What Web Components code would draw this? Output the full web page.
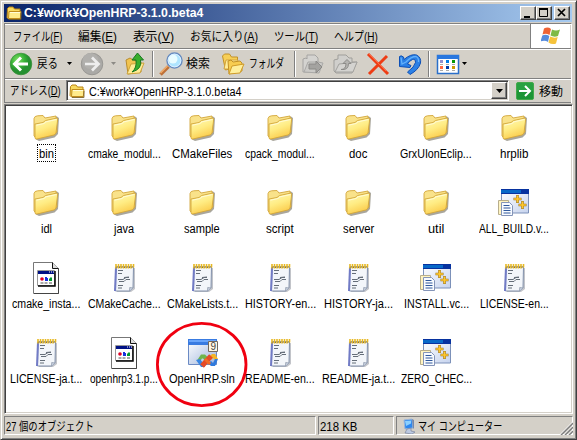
<!DOCTYPE html>
<html lang="ja">
<head>
<meta charset="utf-8">
<title>C:¥work¥OpenHRP-3.1.0.beta4</title>
<style>
html,body{margin:0;width:577px;height:440px;overflow:hidden;background:#d4d0c8}
body{font:12px/14px "Liberation Sans","Noto Sans CJK JP",sans-serif;color:#000}
</style>
</head>
<body>
<explorer-window></explorer-window>
<script>
const folder = `<g transform="translate(0 1)"><path d="M5 8Q8 3 14 4L15 7L27 3.500L29 5L28 21L24.500 24.500L9 28L6 26.500Z" fill="#6f6a5c" opacity=".6"/>
<path d="M4 5.500Q4.500 3 7.500 2.800L13 2.500L15 5L26 3L27 19L7 25.500L4 23Z" fill="#f9e28a" stroke="#d3a63a" stroke-width=".9"/>
<path d="M5 11L13 9.500L15.500 7.500L27 5Q28 5.500 27.500 8L26 20Q25.500 21.500 24 22L7 26Q5 26.500 5 24.500Z" fill="url(#g)" stroke="#d3a63a" stroke-width=".9"/>
<path d="M6.500 12.200L14 10.500L16 8.800L26.500 6.500" stroke="#fffbd5" fill="none"/></g>
<defs><linearGradient id="g" x1="0" y1="0" x2=".4" y2="1"><stop offset="0" stop-color="#fffbbd"/><stop offset=".55" stop-color="#ffec83"/><stop offset="1" stop-color="#fbcd4e"/></linearGradient></defs>`;
const ICONS = {
folder:['0 0 32 32',folder],
small:['0 0 16 16',`<path d="M1.500 3.500L3 2h4l1.500 2H14v10H2.500L1 12.500Z" fill="#f8d95f" stroke="#b98516"/><path d="M2.500 13.500L3 6.500h12l-.7 7z" fill="#ffeb8b" stroke="#c18d1e"/><path d="M4 7.500h10" stroke="#fffcd7"/><path d="M3 14.500h12V8" fill="none" stroke="#715b25" stroke-width=".8"/>`],
note:['0 0 32 32',`<path d="M9 7L27 6v21l-4 3H9Z" fill="#9a9da5" opacity=".6"/><path d="M8 4.500L25.500 4.500L25 26L21.500 29H7.500Z" fill="#f3f6fa" stroke="#8291ac"/><path d="M7 5L9 6L8 29H6Z" fill="#717bc5"/><path d="M21.500 29l.2-3.500L25 26" fill="#c8d1df" stroke="#8995a8" stroke-width=".7"/><path d="M10 8.500h5M10 11.500h4M10 23.500h5M10 26h4M10 17.500h5l3-2h3M11 19.500h5l2-2h4M16 15.500l5-.5" stroke="#656e79" fill="none"/><path d="M8 2V6.500M10.500 2V6.500M13 2V6.500M15.500 2V6.500M18 2V6.500M20.500 2V6.500M23 2V6.500M25.500 2V5.500" stroke="#e7b822" stroke-width="1.600"/><path d="M8.500 5.500h17" stroke="#8b7545" stroke-dasharray="1 1.500"/>`],
file:['0 0 32 32',`<path d="M3.500.5h19l6 6v25h-25z" fill="#fff" stroke="#777"/><path d="M28.500 7v24.500H4" stroke="#444" fill="none"/><path d="M22.500.5v6h6" fill="#ddd" stroke="#111"/><path d="M7.500 8.500h17v15h-17z" fill="#fff" stroke="#999"/><path d="M25 9v15H8" stroke="#000" fill="none" stroke-width="1.500"/><path d="M8 9h16v3H8z" fill="#001184"/><path d="M19 10h1m1 0h1m1 0h1" stroke="#fff"/><circle cx="12" cy="17" r="1.800" fill="#e00024"/><path d="M15 15h2v1h1v3h-3z" fill="#1831dc"/><path d="M19 19v-2l2-2 1 1v3z" fill="#009a2e"/><path d="M10.500 21h3m1 0h3m1.500 0h3" stroke="#555"/>`],
project:['1 0 32 32',`<defs><linearGradient id="p" x2="1" y2="1"><stop stop-color="#fff"/><stop offset="1" stop-color="#c6d3ee"/></linearGradient></defs><path d="M4.500 3h27v23h-27z" fill="url(#p)" stroke="#7c91b9"/><path d="M4 2h28v5H4z" fill="#07329f"/><path d="M4 3h20v3H4z" fill="#0768c8"/><path d="M20.500 8v8M16.500 12h8M25.500 14v8M21.500 18h8" stroke="#9a7219" stroke-width="2.600"/><path d="M20.500 8.500v7M17 12h7M25.500 14.500v7M22 18h7" stroke="#ffc82d" stroke-width="1.700"/><path d="M1.500 13.500h10v14h-10z" fill="#fff4c0" stroke="#b8ae8c"/><path d="M4.500 15.500h8l3 3v10h-11z" fill="#f8fbff" stroke="#8494b8"/><path d="M6.500 18.500h6m-6 2.500h7m-7 2.500h7m-7 2.500h7" stroke="#30599c"/>`],
solution:['0 0 32 32',`<defs><linearGradient id="s" x2="1" y2="1"><stop stop-color="#fff"/><stop offset="1" stop-color="#9eb4dc"/></linearGradient></defs><path d="M2.500 3.500h28v24h-28z" fill="url(#s)" stroke="#6b8ac4"/><path d="M2 2h29v6H2z" fill="#397be1"/><path d="M3 3h27v2H3z" fill="#69a5fa"/><path d="M22.500 4.500h9v10h-9z" fill="#fff8e4" stroke="#73685c"/><path d="M15 17.500h4l4 4-3 3-3-3h-1l-2 3-3-1z" fill="#6fb54c"/><path d="M10 23l4-1 3 4 2-1v5h-4z" fill="#3886e2"/><path d="M22 21l4-4h3l3 5-3 1-2-2-2 2z" fill="#f4b426"/><path d="M22 26l3-2 2 2 2-4h3l-3 7h-4z" fill="#2f7add"/><path d="M16 29l9-10" stroke="#e64a26" stroke-width="5"/><path d="M19 22l5 5" stroke="#f26b25" stroke-width="3"/><text x="24.400" y="13" font-family="Liberation Sans" font-size="10" fill="#444">9</text>`],
back:['0 0 24 24',`<defs><radialGradient id="b" cx=".35" cy=".3"><stop stop-color="#7fdf65"/><stop offset=".65" stop-color="#35b035"/><stop offset="1" stop-color="#249030"/></radialGradient></defs><circle cx="12" cy="12" r="10.800" fill="url(#b)" stroke="#368d35" stroke-width=".7"/><path d="M19 12H6M12 5.500L5.500 12l6.500 6.500" fill="none" stroke="#fff" stroke-width="3"/>`],
forward:['0 0 24 24',`<circle cx="12" cy="12" r="10.800" fill="#aaa9a6" stroke="#92918d" stroke-width=".8"/><circle cx="10.500" cy="9" r="8" fill="#b1b0ad"/><path d="M5 12h13M12 5.500l6.500 6.500-6.500 6.500" fill="none" stroke="#eee" stroke-width="2.700"/>`],
up:['0 0 20 24',`<path d="M1 8l4-2 3 2 8 2v10L3 22z" fill="#f1c451" stroke="#b98c2d"/><path d="M2 22l4-10 13-1-4 10z" fill="#ffec96" stroke="#cda33c"/><path d="M7 20q5-4 4-12H7l5.500-7 6 7h-3q2 9-8.500 12z" fill="#39ae2d" stroke="#187721"/>`],
search:['0 0 24 24',`<path d="M1.500 22.500l8-8" stroke="#bd7038" stroke-width="3.500"/><path d="M1.500 21l7-7" stroke="#f2ac69" stroke-width="1.500"/><circle cx="15.500" cy="8.500" r="7.500" fill="#aee5ff" stroke="#688cbf" stroke-width="1.500"/><circle cx="14" cy="7" r="4.500" fill="#e9fcff"/><circle cx="15.500" cy="8.500" r="6.400" fill="none" stroke="#dcefff"/>`],
folders:['0 0 24 24',`<path d="M1.500 4l2-2h5l2 3h6v10l-12 3z" fill="#f7cf57" stroke="#c29128"/><path d="M3 17l2-9h12l-2 9z" fill="#ffed9b" stroke="#d2a33e"/><path d="M7 9l3-1 2 2 7-1 2 2v8L8 22z" fill="#f8cd51" stroke="#c29128"/><path d="M8 22l3-8 12-2-4 9z" fill="#ffef9c" stroke="#d09c2a"/>`],
move:['0 0 24 24',`<path d="M2 20V7l3-1 1 1V3h8l3 3v14z" fill="#d4d3d0" stroke="#a5a4a2"/><path d="M3 20l4-10h10l5 1-4 10z" fill="#cbcac7" stroke="#aaa9a7"/><path d="M8 12h7V9l6 6-6 6v-4H8z" fill="#a4a3a0" stroke="#8b8a87"/>`],
copy:['0 0 25 24',`<path d="M1 19V8l4-1V3h8l3 3h3v4h5l-5 11H3z" fill="#d0cfcc" stroke="#a09f9b"/><path d="M2 20l4-8 18-2-4 10z" fill="#d4d3d0" stroke="#a3a29f"/><path d="M8 17.500q5 0 5-6h-3l4-4 4 4h-2.500q0 7-7.500 6z" fill="#b5b4b1" stroke="#8c8b88"/>`],
del:['0 0 24 24',`<path d="M2 2l20 20M21 4L3 22" stroke="#ee3c14" stroke-width="3"/><path d="M3 2l17 17" stroke="#ff6940"/>`],
undo:['0 0 24 24',`<path d="M1.500 4.500Q3 3 5.500 5L6 7.500Q13 1.500 18.500 3Q23.500 5.500 22.500 11Q20.500 18 12 22.500L9.500 20Q16.500 15 17.500 10.500Q17.500 6.500 14.500 7.500Q11 9 9.500 12L13 13.500L12 15.500L1.500 14.500Z" fill="#2b80e6" stroke="#0d4fb5" stroke-linejoin="round"/><path d="M3 5.500L4 12L8 10Q13 4.500 18 4.500Q21 6 20.500 10" fill="none" stroke="#63b1fb" stroke-width="1.300"/>`],
views:['0 0 24 24',`<rect x="1.500" y="3.500" width="21" height="18" fill="#fff" stroke="#2a6fc9" stroke-width="1.500"/><path d="M1 3h22v4H1z" fill="#2977df"/><path d="M4 8h3v3H4z" fill="#9290cf"/><path d="M10 8h3v3h-3z" fill="#007ce8"/><path d="M16 8h3v3h-3z" fill="#079807"/><path d="M4 14h3v3H4z" fill="#ff6843"/><path d="M10 14h3v3h-3z" fill="#003ba9"/><path d="M16 14h3v3h-3z" fill="#cc9900"/><path d="M4 12.500h3m3 0h3m3 0h3M4 18.500h3m3 0h3m3 0h3" stroke="#aaa"/>`],
go:['0 0 18 18',`<rect x=".5" y=".5" width="17" height="17" rx="1.500" fill="#28a141" stroke="#43a84a"/><path d="M1 17V9h16v8z" fill="#118a2b" opacity=".5"/><path d="M3 9h11M9 4l5 5-5 5" fill="none" stroke="#fff" stroke-width="2"/>`],
pc:['0 0 16 16',`<path d="M3 2l8-1 1 9-8 1z" fill="#2c87ef" stroke="#9bb5d8"/><path d="M4 3l6-.5v3L5 8z" fill="#8bd0ff"/><path d="M11 1l2 1v9l-1-1z" fill="#7688aa"/><path d="M6 11l4-1v3l4 1-3 2-7-1z" fill="#bcc9e1" stroke="#6c7897" stroke-width=".6"/>`],
flag:['0 0 20 18',`<path d="M3 1.500Q7-.5 10 2L8.500 8Q5 6 1.500 7.500z" fill="#ef6334"/><path d="M11 2.500q4 2 8 0L17 9q-4 1.500-7.500-.5z" fill="#7dba46"/><path d="M1.300 8.500q3.500-1.500 7 .5L7 15q-3-2-7.500-.5z" fill="#568bdd"/><path d="M9.200 9.500q4 2 7.500.5L15 16.500q-4 1.500-7.500-1z" fill="#f6c33b"/>`],
drop:['0 0 7 4',`<path d="M0 0h7L3.500 4z" fill="currentColor"/>`],
min:['0 0 16 14',`<path d="M4 10h6v2H4z"/>`],
max:['0 0 16 14',`<path d="M3.500 3h8v7.500h-8z" fill="none" stroke="#000"/><path d="M3 3h9" stroke="#000" stroke-width="2"/>`],
close:['0 0 16 14',`<path d="M4 3l7 7M11 3l-7 7" stroke="#000" stroke-width="1.700"/>`],
grip:['0 0 13 13',`<path d="M1 13L13 1M5 13l8-8M9 13l4-4" stroke="#808080" stroke-width="1.600"/><path d="M0 12.500L12.500 0M4 12.500L12.500 4M8 12.500l4.500-4.500" stroke="#fff" stroke-width=".8"/>`]
};

class UiIcon extends HTMLElement {
  connectedCallback(){
    const [box,art]=ICONS[this.getAttribute('name')];
    const w=this.getAttribute('w')||32,h=this.getAttribute('h')||w;
    (this.shadowRoot||this.attachShadow({mode:'open'})).innerHTML=
      `<style>:host{display:block;flex:none;width:${w}px;height:${h}px}svg{display:block}</style><svg width="${w}" height="${h}" viewBox="${box}" fill="#000">${art}</svg>`;
  }
}
/* One line of text, set to the width given in the w attribute. */
class FitText extends HTMLElement {
  connectedCallback(){
    const w=+this.getAttribute('w');
    const r=this.shadowRoot||this.attachShadow({mode:'open'});
    r.innerHTML=`<style>:host{display:block;flex:none;width:${w}px;height:14px;line-height:14px;white-space:nowrap}span{display:inline-block;transform-origin:0 50%}</style><span><slot></slot></span>`;
    const s=r.querySelector('span');
    s.style.transform=`scaleX(${w/s.offsetWidth})`;
  }
}
class FileItem extends HTMLElement {
  connectedCallback(){
    const r=this.attachShadow({mode:'open'});
    r.innerHTML=`<style>:host{display:flex;flex-direction:column;align-items:center;position:relative}
      .l{margin-top:1px;padding:2px 1px 0;height:14px}:host([focused]) .l{outline:1px dotted #000}
      .ring{display:none;position:absolute;left:-8px;top:-16px}:host([circled]) .ring{display:block}</style>
      <ui-icon name="${this.getAttribute('icon')}"></ui-icon>
      <div class="l"><fit-text w="${this.getAttribute('w')}">${this.getAttribute('label')}</fit-text></div>
      <svg class="ring" width="94" height="88"><ellipse cx="46.700" cy="43.500" rx="44.300" ry="41.200" fill="none" stroke="#f00010" stroke-width="2.800"/></svg>`;
  }
}
class TitleBar extends HTMLElement {
  connectedCallback(){
    this.attachShadow({mode:'open'}).innerHTML=`<style>:host{display:flex;align-items:center;height:18px;margin-right:1px;padding-left:2px;background:linear-gradient(90deg,#0a246a,#a6caf0);color:#fff;font-weight:bold}
    .b{box-sizing:border-box;width:16px;height:14px;background:#d4d0c8;border:1px solid;border-color:#fff #404040 #404040 #fff;box-shadow:inset -1px -1px #808080}
    .b ui-icon{margin:-1px}.sp{flex:1}.c{margin:0 2px}</style>
    <ui-icon name="small" w="16"></ui-icon><fit-text w="179" style="margin-left:2px">C:¥work¥OpenHRP-3.1.0.beta4</fit-text><div class="sp"></div>
    <div class="b"><ui-icon name="min" w="16" h="14"></ui-icon></div><div class="b"><ui-icon name="max" w="16" h="14"></ui-icon></div><div class="b c"><ui-icon name="close" w="16" h="14"></ui-icon></div>`;
  }
}
class MenuBar extends HTMLElement {
  connectedCallback(){
    const items=[['ファイル','F',49],['編集','E',39],['表示','V',41],['お気に入り','A',68],['ツール','T',44],['ヘルプ','H',44]];
    this.attachShadow({mode:'open'}).innerHTML=`<style>:host{display:flex;height:24px}
    nav{display:flex;gap:16px;align-items:center;flex:1;padding:1px 0 0 8px}
    .f{box-sizing:border-box;width:40px;margin:0 1px 0 0;background:#fff;border-left:1px solid #808080;display:flex;align-items:center;justify-content:center}</style>
    <nav>${items.map(([t,k,w])=>`<fit-text w="${w}">${t}(<u>${k}</u>)</fit-text>`).join('')}</nav><div class="f"><ui-icon name="flag" w="20" h="18"></ui-icon></div>`;
  }
}
class ToolBar extends HTMLElement {
  connectedCallback(){
    const i=(n,w,m,h)=>`<ui-icon name="${n}" w="${w}" h="${h||24}" style="margin-left:${m}px"></ui-icon>`;
    const sep=m=>`<i style="margin-left:${m}px"></i>`;
    this.attachShadow({mode:'open'}).innerHTML=`<style>:host{display:flex;align-items:center;height:29px;padding-left:4px}
    i{width:1px;height:26px;background:#808080;border-right:1px solid #fff}.g{color:#8c8a85}</style>
    ${i('back',24,0)}<fit-text w="21" style="margin-left:4px">戻る</fit-text>${i('drop',5,9,3)}
    ${i('forward',24,8)}<div class="g">${i('drop',5,7,3)}</div>${i('up',20,9)}${sep(7)}
    ${i('search',24,5)}<fit-text w="24" style="margin-left:3px">検索</fit-text>${i('folders',24,11)}<fit-text w="35" style="margin-left:4px">フォルダ</fit-text>${sep(10)}
    ${i('move',24,5)}${i('copy',25,8)}${i('del',24,8)}${i('undo',24,8)}${sep(6)}${i('views',24,6)}${i('drop',5,2,3)}`;
  }
}
class AddressBar extends HTMLElement {
  connectedCallback(){
    this.attachShadow({mode:'open'}).innerHTML=`<style>:host{display:flex;align-items:center;height:23px;padding-left:5px}
    .f{box-sizing:border-box;display:flex;align-items:center;width:443px;height:21px;margin-left:5px;padding-left:1px;background:#fff;border:1px solid;border-color:#808080 #fff #fff #808080;box-shadow:inset 1px 1px #404040,inset -1px -1px #d4d0c8}
    .sp{flex:1}.d{box-sizing:border-box;width:16px;height:17px;margin-right:1px;background:#d4d0c8;border:1px solid;border-color:#fff #404040 #404040 #fff;box-shadow:inset -1px -1px #808080;display:flex;align-items:center;justify-content:center}</style>
    <fit-text w="51">アドレス(<u>D</u>)</fit-text><div class="f"><ui-icon name="small" w="16" style="margin-left:1px"></ui-icon><fit-text w="152" style="margin:2px 0 0 4px">C:¥work¥OpenHRP-3.1.0.beta4</fit-text><div class="sp"></div><div class="d"><ui-icon name="drop" w="7" h="4"></ui-icon></div></div>
    <ui-icon name="go" w="18" style="margin-left:7px"></ui-icon><fit-text w="24" style="margin:2px 0 0 5px">移動</fit-text>`;
  }
}
class FileGrid extends HTMLElement {
  connectedCallback(){
    const files=[['bin',15],['cmake_modul...',73],['CMakeFiles',60],['cpack_modul...',70],['doc',18],['GrxUIonEclip...',72],['hrplib',28],
    ['idl',11],['java',20],['sample',36],['script',28],['server',31],['util',16],['ALL_BUILD.v...',70,'project'],
    ['cmake_insta...',68,'file'],['CMakeCache...',73,'note'],['CMakeLists.t...',71,'note'],['HISTORY-en...',71,'note'],['HISTORY-ja...',69,'note'],['INSTALL.vc...',65,'project'],['LICENSE-en...',69,'note'],
    ['LICENSE-ja.t...',72,'note'],['openhrp3.1.p...',68,'file'],['OpenHRP.sln',66,'solution'],['README-en...',70,'note'],['README-ja.t...',73,'note'],['ZERO_CHEC...',71,'project']];
    this.attachShadow({mode:'open'}).innerHTML=`<style>:host{box-sizing:border-box;display:grid;grid-template-columns:repeat(7,78px);grid-auto-rows:75px;height:310px;padding:7px 0 0 2px;background:#fff;border:1px solid;border-color:#808080 #fff #fff #808080;box-shadow:inset 1px 1px #404040,inset -1px -1px #d4d0c8}</style>
    ${files.map(([n,w,k],x)=>`<file-item label="${n}" w="${w}" icon="${k||'folder'}" ${x?'':'focused'} ${k==='solution'?'circled':''}></file-item>`).join('')}`;
  }
}
class StatusBar extends HTMLElement {
  connectedCallback(){
    this.attachShadow({mode:'open'}).innerHTML=`<style>:host{display:flex;gap:2px;height:19px;margin-top:2px}
    div{box-sizing:border-box;display:flex;align-items:center;border:1px solid;border-color:#808080 #fff #fff #808080}fit-text{position:relative;top:1px}</style>
    <div style="width:312px;padding-left:1px"><fit-text w="88">27 個のオブジェクト</fit-text></div><div style="width:76px;padding-left:1px"><fit-text w="37">218 KB</fit-text></div>
    <div style="flex:1;padding-left:4px"><ui-icon name="pc" w="16"></ui-icon><fit-text w="84" style="margin-left:1px">マイ コンピューター</fit-text><ui-icon name="grip" w="13" style="margin:5px -1px 0 auto"></ui-icon></div>`;
  }
}
class ExplorerWindow extends HTMLElement {
  connectedCallback(){
    this.attachShadow({mode:'open'}).innerHTML=`<style>:host{box-sizing:border-box;display:block;width:577px;height:440px;padding:3px 3px 2px;background:#d4d0c8;border:1px solid;border-color:#d4d0c8 #404040 #404040 #d4d0c8;box-shadow:inset 1px 1px #fff,inset -1px -1px #808080}
    .bars{margin-top:1px;margin-right:1px;border:1px solid #808080;border-right-color:#fff;border-bottom:0}
    .bars>*{border-bottom:1px solid #808080;box-shadow:inset 0 1px #fff}file-grid{margin-top:1px}</style>
    <title-bar></title-bar><div class="bars"><menu-bar></menu-bar><tool-bar></tool-bar><address-bar></address-bar></div><file-grid></file-grid><status-bar></status-bar>`;
  }
}
for(const [n,c] of [['ui-icon',UiIcon],['fit-text',FitText],['file-item',FileItem],['title-bar',TitleBar],['menu-bar',MenuBar],['tool-bar',ToolBar],['address-bar',AddressBar],['file-grid',FileGrid],['status-bar',StatusBar],['explorer-window',ExplorerWindow]]) customElements.define(n,c);
</script>
</body>
</html>
